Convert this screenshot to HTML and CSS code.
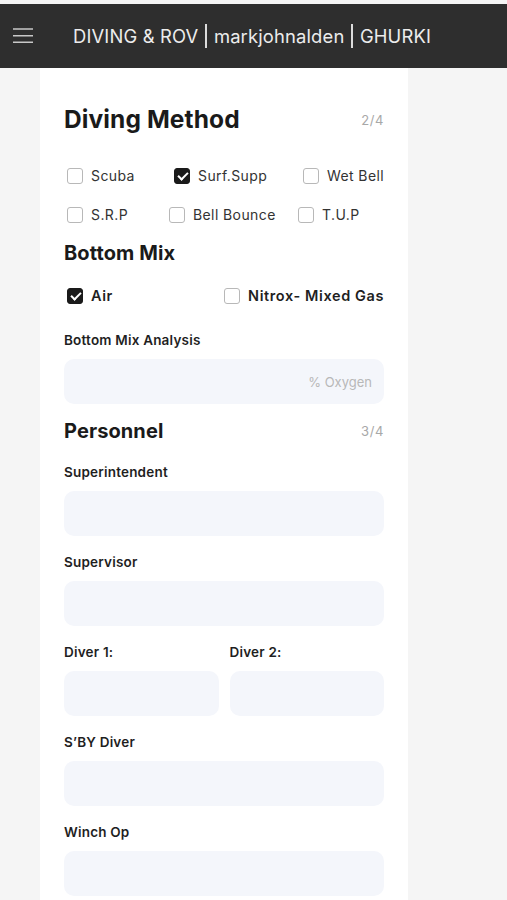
FILE: index.html
```html
<!DOCTYPE html>
<html lang="en">
<head>
    <meta charset="UTF-8">
    <meta name="viewport" content="width=device-width, initial-scale=1.0">
    <title>Dive Log</title>
    <link rel="stylesheet" href="styles.css">
</head>
<body>
    <header class="top-bar">
        <svg class="menu-icon" width="20" height="16" viewBox="0 0 20 16">
            <path d="M0 1h20M0 7.7h20M0 14.3h20" stroke="#c8c8c8" stroke-width="1.6"/>
        </svg>
        <div class="top-title">DIVING &amp; ROV <span class="bar"></span> markjohnalden <span class="bar"></span> GHURKI</div>
    </header>

    <main class="page">
        <div class="card">
            <div class="section-head">
                <h1>Diving Method</h1>
                <span class="step">2/4</span>
            </div>
            <div class="method-grid">
                <div class="check-row row-one">
                    <label class="check"><span class="box"></span>Scuba</label>
                    <label class="check"><span class="box checked"></span>Surf.Supp</label>
                    <label class="check"><span class="box"></span>Wet Bell</label>
                </div>
                <div class="check-row row-two">
                    <label class="check"><span class="box"></span>S.R.P</label>
                    <label class="check"><span class="box"></span>Bell Bounce</label>
                    <label class="check"><span class="box"></span>T.U.P</label>
                </div>
            </div>

            <h2 class="sub-title">Bottom Mix</h2>
            <div class="mix-row">
                <label class="check strong"><span class="box checked"></span>Air</label>
                <label class="check strong"><span class="box"></span>Nitrox- Mixed Gas</label>
            </div>

            <div class="field">
                <div class="field-label">Bottom Mix Analysis</div>
                <div class="input right">% Oxygen</div>
            </div>

            <div class="section-head personnel">
                <h2>Personnel</h2>
                <span class="step">3/4</span>
            </div>

            <div class="field">
                <div class="field-label">Superintendent</div>
                <div class="input"></div>
            </div>
            <div class="field">
                <div class="field-label">Supervisor</div>
                <div class="input"></div>
            </div>
            <div class="field-pair">
                <div class="field">
                    <div class="field-label">Diver 1:</div>
                    <div class="input"></div>
                </div>
                <div class="field">
                    <div class="field-label">Diver 2:</div>
                    <div class="input"></div>
                </div>
            </div>
            <div class="field">
                <div class="field-label">S’BY Diver</div>
                <div class="input"></div>
            </div>
            <div class="field">
                <div class="field-label">Winch Op</div>
                <div class="input"></div>
            </div>
        </div>
    </main>
</body>
</html>
```
FILE: styles.css
```css
body {
    margin: 0;
    padding: 0;
    background: #f5f5f5;
    font-family: 'Inter', 'Noto Sans', sans-serif;
    color: #1a1a1a;
    height: 900px;
    overflow: hidden;
}

/* Top header */
.top-bar {
    margin-top: 4px;
    height: 64px;
    background: #2e2e2e;
    display: flex;
    align-items: center;
    padding-left: 13px;
}

.menu-icon {
    flex-shrink: 0;
}

.top-title {
    margin-left: 40px;
    color: #ececec;
    font-size: 18.4px;
    letter-spacing: 0.15px;
    white-space: nowrap;
    display: flex;
    align-items: center;
    gap: 7px;
}

.top-title .bar {
    display: inline-block;
    width: 1.5px;
    height: 24px;
    background: #dcdcdc;
}

/* Form card */
.page {
    padding-left: 40px;
}

.card {
    width: 320px;
    background: white;
    padding: 37px 24px 20px;
    min-height: 820px;
}

.section-head {
    display: flex;
    justify-content: space-between;
    align-items: center;
}

.section-head h1 {
    margin: 0;
    font-size: 24.5px;
    line-height: 29px;
    font-weight: 700;
    letter-spacing: 0.1px;
}

.section-head h2,
.sub-title {
    margin: 0;
    font-size: 20px;
    line-height: 24px;
    font-weight: 700;
    letter-spacing: 0.1px;
}

.step {
    color: #a8a8a8;
    font-size: 13px;
    letter-spacing: 0.6px;
}

.method-grid {
    margin-top: 33px;
    margin-bottom: 18px;
    display: flex;
    flex-direction: column;
    gap: 22px;
}

.check-row {
    display: grid;
    padding-left: 3px;
}

.row-one {
    grid-template-columns: 107px 129px auto;
}

.row-two {
    grid-template-columns: 102px 129px auto;
}

.check {
    display: flex;
    align-items: center;
    font-size: 14px;
    line-height: 17px;
    color: #333;
    letter-spacing: 0.4px;
    white-space: nowrap;
}

.check.strong {
    font-weight: 600;
    font-size: 14.5px;
    letter-spacing: 0.6px;
    color: #1f1f1f;
}

.box {
    width: 16px;
    height: 16px;
    border: 1.5px solid #b8b8b8;
    border-radius: 3px;
    margin-right: 8px;
    box-sizing: border-box;
    flex-shrink: 0;
}

.box.checked {
    background: #1a1a1a;
    border-color: #1a1a1a;
    position: relative;
}

.box.checked::after {
    content: '';
    position: absolute;
    left: 4.5px;
    top: 1.5px;
    width: 4px;
    height: 8px;
    border: solid white;
    border-width: 0 2px 2px 0;
    transform: rotate(45deg);
}

.mix-row {
    display: flex;
    justify-content: space-between;
    padding-left: 3px;
    margin-top: 22px;
    margin-bottom: 28px;
}

.field {
    margin-bottom: 18px;
}

.field-label {
    font-size: 13.5px;
    line-height: 16px;
    font-weight: 600;
    color: #1f1f1f;
    margin-bottom: 11px;
    letter-spacing: 0.2px;
}

.input {
    height: 45px;
    border-radius: 10px;
    background: #f4f6fb;
    color: #b8b8b8;
    font-size: 13px;
    display: flex;
    align-items: center;
    padding: 0 12px;
    box-sizing: border-box;
}

.input.right {
    justify-content: flex-end;
}

.personnel {
    margin-top: -3px;
    margin-bottom: 21px;
}

.field-pair {
    display: flex;
    gap: 11px;
}

.field-pair .field {
    flex: 1;
}
```
